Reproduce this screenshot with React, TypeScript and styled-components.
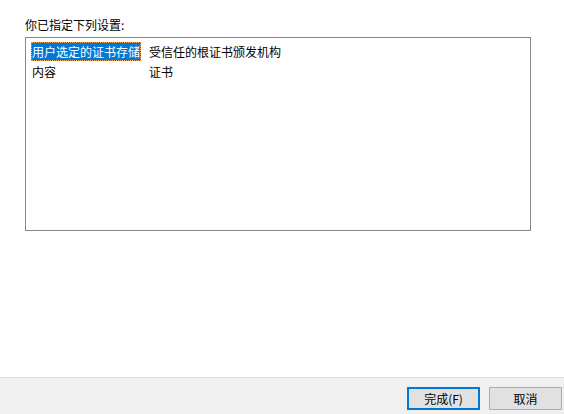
import React from "react";
import styled, { createGlobalStyle } from "styled-components";

const Global = createGlobalStyle`
  html, body { margin: 0; padding: 0; background: #ffffff; }
  body { width: 564px; height: 414px; overflow: hidden; }
  * { box-sizing: border-box; }
`;

const Page = styled.div`
  width: 564px;
  height: 414px;
  display: flex;
  flex-direction: column;
  font-family: "Microsoft YaHei", "Noto Sans CJK SC", "Noto Sans", sans-serif;
  font-size: 12px;
  color: #000;
  background: #fff;
`;

const Body = styled.div`
  flex: 1;
  padding: 16px 33px 0 25px;
  display: flex;
  flex-direction: column;
`;

const Label = styled.div`
  height: 21px;
  line-height: 16px;
  padding-top: 1px;
`;

const ListBox = styled.div`
  width: 506px;
  height: 194px;
  border: 1px solid #828790;
  padding: 3px 5px;
  display: flex;
  flex-direction: column;
`;

const Row = styled.div`
  display: grid;
  grid-template-columns: 117px 1fr;
  height: 20px;
  align-items: center;
`;

const Cell = styled.span<{ $selected?: boolean }>`
  justify-self: start;
  height: 19px;
  line-height: 19px;
  padding: 0 1px 0 1px;
  white-space: nowrap;
  ${(p) =>
    p.$selected
      ? `background: #0078d7; color: #fff; outline: 1px dotted #f2a65a; outline-offset: -1px;`
      : ``}
`;

const Footer = styled.div`
  height: 37px;
  background: #f0f0f0;
  border-top: 1px solid #dfdfdf;
  display: flex;
  justify-content: flex-end;
  align-items: flex-start;
  gap: 9px;
  padding: 9px 2px 0 0;
`;

const Button = styled.button<{ $default?: boolean }>`
  width: 73px;
  height: 23px;
  font-family: inherit;
  font-size: 12px;
  color: #000;
  background: #e1e1e1;
  border: ${(p) => (p.$default ? "2px solid #0078d7" : "1px solid #adadad")};
  padding: 0;
  margin: 0;
  line-height: 18px;
`;

const rows: [string, string, boolean][] = [
  ["用户选定的证书存储", "受信任的根证书颁发机构", true],
  ["内容", "证书", false],
];

export default function App() {
  return (
    <Page>
      <Global />
      <Body>
        <Label>你已指定下列设置:</Label>
        <ListBox>
          {rows.map(([a, b, sel]) => (
            <Row key={a}>
              <Cell $selected={sel}>{a}</Cell>
              <Cell>{b}</Cell>
            </Row>
          ))}
        </ListBox>
      </Body>
      <Footer>
        <Button $default>完成(F)</Button>
        <Button>取消</Button>
      </Footer>
    </Page>
  );
}
